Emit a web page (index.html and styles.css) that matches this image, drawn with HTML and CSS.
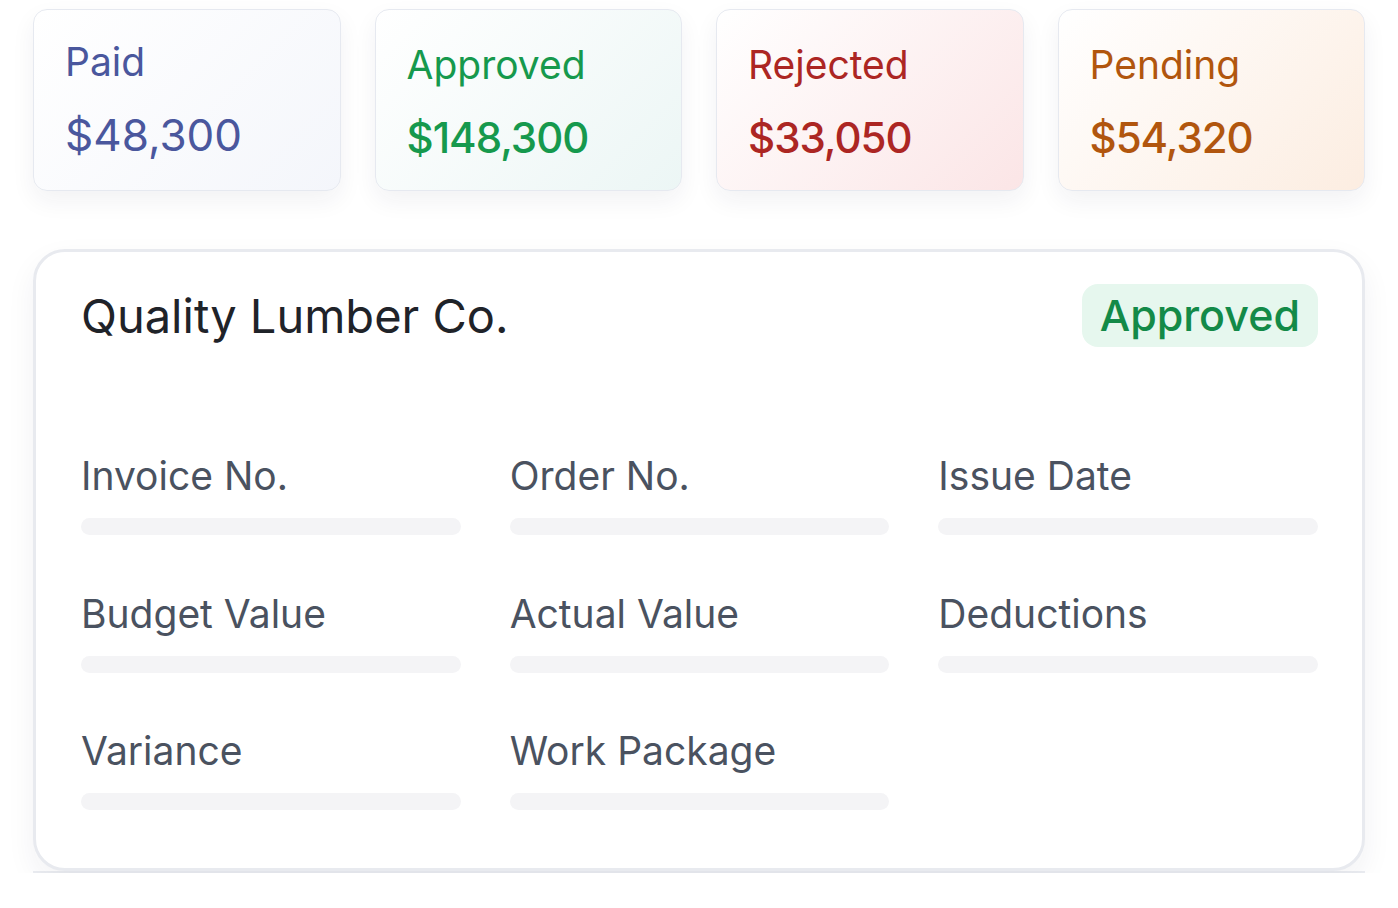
FILE: index.html
```html
<!DOCTYPE html>
<html lang="en">
<head>
  <meta charset="UTF-8" />
  <meta name="viewport" content="width=device-width, initial-scale=1" />
  <title>Invoices</title>
  <link rel="stylesheet" href="styles.css">
</head>
<body>
  <div class="page">
    <div class="stats">
      <div class="stat stat-paid">
        <div class="stat-label">Paid</div>
        <div class="stat-value">$48,300</div>
      </div>
      <div class="stat stat-approved">
        <div class="stat-label">Approved</div>
        <div class="stat-value">$148,300</div>
      </div>
      <div class="stat stat-rejected">
        <div class="stat-label">Rejected</div>
        <div class="stat-value">$33,050</div>
      </div>
      <div class="stat stat-pending">
        <div class="stat-label">Pending</div>
        <div class="stat-value">$54,320</div>
      </div>
    </div>

    <div class="panel-wrap">
      <div class="panel">
        <div class="panel-head">
          <div class="panel-title">Quality Lumber Co.</div>
          <div class="badge">Approved</div>
        </div>
        <div class="fields">
          <div class="field">
            <div class="field-label">Invoice No.</div>
            <div class="field-bar"></div>
          </div>
          <div class="field">
            <div class="field-label">Order No.</div>
            <div class="field-bar"></div>
          </div>
          <div class="field">
            <div class="field-label">Issue Date</div>
            <div class="field-bar"></div>
          </div>
          <div class="field">
            <div class="field-label">Budget Value</div>
            <div class="field-bar"></div>
          </div>
          <div class="field">
            <div class="field-label">Actual Value</div>
            <div class="field-bar"></div>
          </div>
          <div class="field">
            <div class="field-label">Deductions</div>
            <div class="field-bar"></div>
          </div>
          <div class="field">
            <div class="field-label">Variance</div>
            <div class="field-bar"></div>
          </div>
          <div class="field">
            <div class="field-label">Work Package</div>
            <div class="field-bar"></div>
          </div>
        </div>
      </div>
    </div>
  </div>
</body>
</html>
```

FILE: styles.css
```css
body {
  margin: 0;
  padding: 0;
  background: #ffffff;
  font-family: Inter, "Noto Sans", Arial, sans-serif;
}
.page {
  padding: 9px 33px 0 33px;
}
.stats {
  display: grid;
  grid-template-columns: repeat(4, 1fr);
  gap: 34px;
}
.stat {
  height: 182px;
  box-sizing: border-box;
  border: 1.5px solid #e6e9f0;
  border-radius: 14px;
  padding: 31px 31px 0 31px;
  box-shadow: 0 10px 24px rgba(30, 40, 70, 0.06);
}
.stat-label {
  font-size: 39px;
  line-height: 48px;
}
.stat-value {
  font-size: 42px;
  line-height: 52px;
  font-weight: 500;
  letter-spacing: -1px;
  margin-top: 23px;
}
.stat-paid {
  background: linear-gradient(135deg, #ffffff 0%, #f4f6fb 100%);
  color: #4a579d;
  padding-top: 28px;
}
.stat-paid .stat-value {
  font-size: 44px;
  font-weight: 400;
  letter-spacing: 0;
}
.stat-approved {
  background: linear-gradient(135deg, #ffffff 0%, #ecf6f5 100%);
  color: #16994d;
}
.stat-rejected {
  background: linear-gradient(135deg, #ffffff 0%, #fbe5e6 100%);
  color: #ac2623;
}
.stat-pending {
  background: linear-gradient(135deg, #ffffff 0%, #fcede1 100%);
  color: #b1560e;
}
.panel-wrap {
  margin-top: 58px;
  border-bottom: 2px solid #eceef2;
}
.panel {
  border: 3px solid #e8eaef;
  border-radius: 32px;
  padding: 32px 44px 58px 45px;
  box-shadow: 0 12px 30px rgba(30, 40, 70, 0.06);
  background: #ffffff;
}
.panel-head {
  display: flex;
  justify-content: space-between;
  align-items: center;
}
.panel-title {
  font-size: 47px;
  line-height: 58px;
  color: #1f2329;
}
.badge {
  background: #e6f7ee;
  color: #138a48;
  font-size: 43px;
  line-height: 54px;
  padding: 4px 18px 5px 18px;
  border-radius: 16px;
  font-weight: 500;
}
.fields {
  display: grid;
  grid-template-columns: repeat(3, 1fr);
  column-gap: 49px;
  row-gap: 54.5px;
  margin-top: 105px;
}
.field-label {
  font-size: 39px;
  line-height: 48px;
  color: #4a5260;
}
.field-bar {
  height: 17px;
  margin-top: 18px;
  border-radius: 9px;
  background: #f4f4f6;
}
```
